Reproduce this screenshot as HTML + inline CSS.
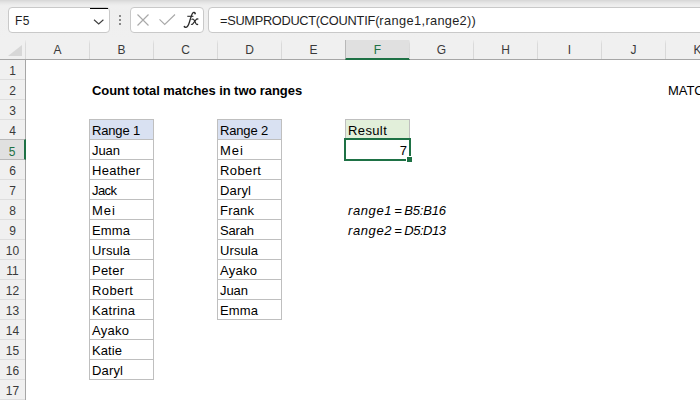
<!DOCTYPE html>
<html><head><meta charset="utf-8"><style>
*{margin:0;padding:0;box-sizing:border-box}
html,body{width:700px;height:400px;overflow:hidden;background:#fff;position:relative;font-family:"Liberation Sans",sans-serif}
#tb{position:absolute;left:0;top:0;width:700px;height:40px;background:linear-gradient(#d6d6d6 0px,#e2e2e2 2px,#eaeaea 4px,#efefef 6px,#f0f0f0 100%)}
.nb{position:absolute;left:8px;top:7px;width:102px;height:26px;background:#fff;border:1px solid #c9c9c9;border-radius:4px}
.nbt{position:absolute;left:6px;top:4px;font-size:12px;letter-spacing:0.3px;line-height:18px;color:#1f1f1f}
.nbbar{position:absolute;left:81px;top:0px;width:18px;height:1px;background:#000}
.chev{position:absolute;left:84px;top:11px}
.dots i{position:absolute;left:119px;width:2px;height:2px;background:#8a8a8a;display:block}
.fbtn{position:absolute;left:130px;top:7px;width:74px;height:26px;background:#fff;border:1px solid #c9c9c9;border-radius:4px}
.fx{position:absolute;left:53px;top:1px;font-family:"Liberation Serif",serif;font-style:italic;font-size:17px;line-height:22px;color:#333}
.fin{position:absolute;left:208px;top:7px;width:500px;height:26px;background:#fff;border:1px solid #c9c9c9;border-radius:4px}
.ft{position:absolute;left:11px;top:4px;font-size:12.8px;line-height:18px;color:#1f1f1f;white-space:nowrap}
#ch{position:absolute;left:0;top:40px;width:700px;height:20px;background:#f0f0f0;border-bottom:1px solid #a6a6a6}
.corner{position:absolute;left:0;top:40px;width:25px;height:19px}
.corner:after{content:"";position:absolute;left:8px;top:5px;width:0;height:0;border-left:14px solid transparent;border-bottom:11px solid #d7d7d7}
.colh{position:absolute;top:40px;width:65px;height:19px;text-align:center;font-size:12px;line-height:19px;color:#3a3a3a}
.colh:before{content:"";position:absolute;left:0;top:0;width:1px;height:19px;background:linear-gradient(#ececec,#dadada 4px,#d8d8d8)}
.colh span{position:relative;top:1px}
.colh.sel:before{display:none}
.colh.sel{background:#e0e0e0;border-left:1px solid #b8b8b8;border-right:1px solid #b8b8b8;border-bottom:2px solid #1e7145;height:20px;color:#1e7145}
#rh{position:absolute;left:0;top:60px;width:26px;height:340px;background:#f0f0f0;border-right:1px solid #a6a6a6}
.rowh{position:absolute;left:0;width:25px;height:21px;border-bottom:1px solid #dedede;text-align:center;font-size:12px;line-height:20px;color:#3a3a3a}
.rowh span{position:relative;top:2px}
.rowh.sel{background:#e0e0e0;border-right:2px solid #1e7145;width:26px;color:#1e7145;border-top:1px solid #b8b8b8;border-bottom:1px solid #b8b8b8}
.ct{position:absolute;font-size:13px;line-height:20px;color:#000;white-space:nowrap;padding-left:2px}
.tbl{position:absolute;border:1px solid #bfbfbf}
.hl{position:absolute;height:1px;background:#bfbfbf}
.fill{position:absolute}
.selbox{position:absolute;border:2px solid #1e7145;width:67px!important;height:23px!important}
.handle{position:absolute;width:7px;height:7px;background:#1e7145;border:1px solid #fff}
</style></head><body>
<div id="tb"></div><div class="nb"><span class="nbt">F5</span><div class="nbbar"></div><svg class="chev" width="12" height="8" viewBox="0 0 12 8"><path d="M1 0.8 L5.7 5 L10.4 0.8" fill="none" stroke="#404040" stroke-width="1.15"/></svg></div><div class="dots"><i style="top:15px"></i><i style="top:19px"></i><i style="top:23px"></i></div><div class="fbtn"><svg style="position:absolute;left:6px;top:6px" width="13" height="13" viewBox="0 0 13 13"><path d="M0.5 0.5 L11.5 11.5 M11.5 0.5 L0.5 11.5" stroke="#a9a9a9" stroke-width="1.15" fill="none"/></svg><svg style="position:absolute;left:28px;top:6px" width="17" height="12" viewBox="0 0 17 12"><path d="M0.5 5.3 L5.7 10.5 L16 0.5" stroke="#a9a9a9" stroke-width="1.15" fill="none"/></svg><svg style="position:absolute;left:49px;top:0px" width="22" height="22" viewBox="180 8 22 22"><path d="M195.4 13.8 C195.3 12.4 193.6 11.9 192.5 13.3 C191.5 14.7 190.5 18.5 189.4 22.2 C188.4 25.6 187.4 27.4 185.6 27.4 C184.6 27.4 184.1 26.9 184.2 26.4" fill="none" stroke="#2a2a2a" stroke-width="1.3"/><circle cx="195.0" cy="13.7" r="0.75" fill="#2a2a2a"/><circle cx="184.6" cy="26.5" r="0.75" fill="#2a2a2a"/><path d="M187.3 16.3 L193.4 16.3" fill="none" stroke="#2a2a2a" stroke-width="1.1"/><path d="M191.6 19.8 C192.3 18.7 193.6 18.7 194.1 20 L195.9 23.6 C196.4 24.7 197.3 24.8 198 24" fill="none" stroke="#2a2a2a" stroke-width="1.2"/><path d="M198.3 19.4 C197.7 18.6 196.8 18.8 196.1 19.6 L193 23.6 C192.3 24.5 191.6 24.6 191.2 24" fill="none" stroke="#2a2a2a" stroke-width="1.2"/></svg></div><div class="fin"><span class="ft"><span style="letter-spacing:-0.31px">=SUMPRODUCT(</span><span style="letter-spacing:-0.2px">COUNTIF(</span><span style="letter-spacing:0.41px">range1,</span><span style="letter-spacing:0.26px">range2))</span></span></div><div id="ch"></div><div class="corner"></div><div class="colh" style="left:25px"><span>A</span></div><div class="colh" style="left:89px"><span>B</span></div><div class="colh" style="left:153px"><span>C</span></div><div class="colh" style="left:217px"><span>D</span></div><div class="colh" style="left:281px"><span>E</span></div><div class="colh sel" style="left:345px"><span>F</span></div><div class="colh" style="left:409px"><span>G</span></div><div class="colh" style="left:473px"><span>H</span></div><div class="colh" style="left:537px"><span>I</span></div><div class="colh" style="left:601px"><span>J</span></div><div class="colh" style="left:665px"><span>K</span></div><div id="rh"></div><div class="rowh" style="top:59px"><span>1</span></div><div class="rowh" style="top:79px"><span>2</span></div><div class="rowh" style="top:99px"><span>3</span></div><div class="rowh" style="top:119px"><span>4</span></div><div class="rowh sel" style="top:139px"><span>5</span></div><div class="rowh" style="top:159px"><span>6</span></div><div class="rowh" style="top:179px"><span>7</span></div><div class="rowh" style="top:199px"><span>8</span></div><div class="rowh" style="top:219px"><span>9</span></div><div class="rowh" style="top:239px"><span>10</span></div><div class="rowh" style="top:259px"><span>11</span></div><div class="rowh" style="top:279px"><span>12</span></div><div class="rowh" style="top:299px"><span>13</span></div><div class="rowh" style="top:319px"><span>14</span></div><div class="rowh" style="top:339px"><span>15</span></div><div class="rowh" style="top:359px"><span>16</span></div><div class="rowh" style="top:379px"><span>17</span></div><div class="ct" style="left:90px;top:81px;font-weight:bold;letter-spacing:-0.07px">Count total matches in two ranges</div><div class="ct" style="left:666px;top:81px;letter-spacing:-0.07px">MATCH</div><div class="tbl" style="left:89px;top:119px;width:65px;height:261px"></div><div class="fill" style="left:90px;top:120px;width:63px;height:19px;background:#d9e1f2"></div><div class="hl" style="left:89px;top:139px;width:65px"></div><div class="hl" style="left:89px;top:159px;width:65px"></div><div class="hl" style="left:89px;top:179px;width:65px"></div><div class="hl" style="left:89px;top:199px;width:65px"></div><div class="hl" style="left:89px;top:219px;width:65px"></div><div class="hl" style="left:89px;top:239px;width:65px"></div><div class="hl" style="left:89px;top:259px;width:65px"></div><div class="hl" style="left:89px;top:279px;width:65px"></div><div class="hl" style="left:89px;top:299px;width:65px"></div><div class="hl" style="left:89px;top:319px;width:65px"></div><div class="hl" style="left:89px;top:339px;width:65px"></div><div class="hl" style="left:89px;top:359px;width:65px"></div><div class="ct" style="left:90px;top:121px;letter-spacing:-0.17px;">Range 1</div><div class="ct" style="left:90px;top:141px;letter-spacing:-0.07px;">Juan</div><div class="ct" style="left:90px;top:161px;letter-spacing:0.29px;">Heather</div><div class="ct" style="left:90px;top:181px;letter-spacing:-0.58px;">Jack</div><div class="ct" style="left:90px;top:201px;letter-spacing:1.02px;">Mei</div><div class="ct" style="left:90px;top:221px;letter-spacing:0.15px;">Emma</div><div class="ct" style="left:90px;top:241px;letter-spacing:0.08px;">Ursula</div><div class="ct" style="left:90px;top:261px;letter-spacing:0.23px;">Peter</div><div class="ct" style="left:90px;top:281px;letter-spacing:0.39px;">Robert</div><div class="ct" style="left:90px;top:301px;letter-spacing:0.3px;">Katrina</div><div class="ct" style="left:90px;top:321px;letter-spacing:0.27px;">Ayako</div><div class="ct" style="left:90px;top:341px;letter-spacing:0.09px;">Katie</div><div class="ct" style="left:90px;top:361px;letter-spacing:0.16px;">Daryl</div><div class="tbl" style="left:217px;top:119px;width:65px;height:201px"></div><div class="fill" style="left:218px;top:120px;width:63px;height:19px;background:#d9e1f2"></div><div class="hl" style="left:217px;top:139px;width:65px"></div><div class="hl" style="left:217px;top:159px;width:65px"></div><div class="hl" style="left:217px;top:179px;width:65px"></div><div class="hl" style="left:217px;top:199px;width:65px"></div><div class="hl" style="left:217px;top:219px;width:65px"></div><div class="hl" style="left:217px;top:239px;width:65px"></div><div class="hl" style="left:217px;top:259px;width:65px"></div><div class="hl" style="left:217px;top:279px;width:65px"></div><div class="hl" style="left:217px;top:299px;width:65px"></div><div class="ct" style="left:218px;top:121px;letter-spacing:-0.17px;">Range 2</div><div class="ct" style="left:218px;top:141px;letter-spacing:1.02px;">Mei</div><div class="ct" style="left:218px;top:161px;letter-spacing:0.39px;">Robert</div><div class="ct" style="left:218px;top:181px;letter-spacing:0.16px;">Daryl</div><div class="ct" style="left:218px;top:201px;letter-spacing:0.19px;">Frank</div><div class="ct" style="left:218px;top:221px;letter-spacing:-0.18px;">Sarah</div><div class="ct" style="left:218px;top:241px;letter-spacing:0.08px;">Ursula</div><div class="ct" style="left:218px;top:261px;letter-spacing:0.27px;">Ayako</div><div class="ct" style="left:218px;top:281px;letter-spacing:-0.07px;">Juan</div><div class="ct" style="left:218px;top:301px;letter-spacing:0.15px;">Emma</div><div class="tbl" style="left:345px;top:119px;width:65px;height:21px"></div><div class="fill" style="left:346px;top:120px;width:63px;height:19px;background:#e2efda"></div><div class="ct" style="left:346px;top:121px;letter-spacing:0.38px;">Result</div><div class="ct" style="left:346px;top:141px;width:61px;text-align:right">7</div><div class="selbox" style="left:344px;top:138px;width:63px;height:19px"></div><div class="handle" style="left:406px;top:156px"></div><div class="ct" style="left:346px;top:201px;font-style:italic"><span style="letter-spacing:0.6px">range1</span><span style="letter-spacing:-1.5px"> </span><span style="letter-spacing:-0.55px">= </span><span style="letter-spacing:-0.2px">B5:B16</span></div><div class="ct" style="left:346px;top:221px;font-style:italic"><span style="letter-spacing:0.6px">range2</span><span style="letter-spacing:-1.5px"> </span><span style="letter-spacing:-0.55px">= </span><span style="letter-spacing:-0.5px">D5:D13</span></div>
</body></html>
